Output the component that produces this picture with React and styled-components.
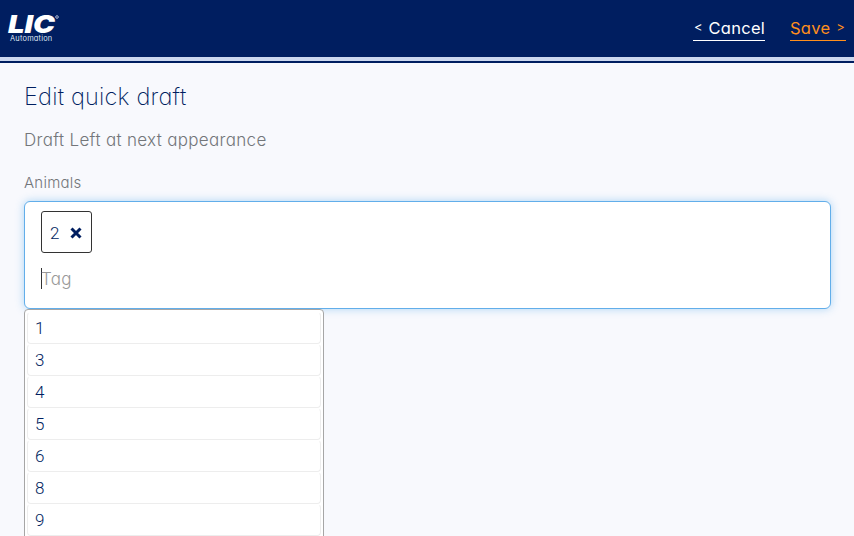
import React from "react";
import styled, { createGlobalStyle } from "styled-components";

const GlobalStyle = createGlobalStyle`
  * { box-sizing: border-box; }
  html, body { margin: 0; height: 100%; overflow: hidden; background: #f8f9fd; }
  body {
    font-family: Inter, Lato, sans-serif;
    font-weight: 300;
    font-feature-settings: "cv11" 1;
    color: #001e60;
  }
`;

const Page = styled.div`
  height: 536px;
  overflow: hidden;
`;

const Header = styled.header`
  display: flex;
  justify-content: space-between;
  height: 63px;
  padding: 0 8px 0 9px;
  background: linear-gradient(#001e60 57px, #ccd8ef 57px, #ccd8ef 61px, #001e60 61px);
`;

const Logo = styled.div`
  width: 52px;
  padding-top: 15px;
  color: #fff;
`;

const LogoName = styled.svg`
  display: block;
  overflow: visible;
  width: 52px;
  height: 19px;
  font: italic 900 25px Inter, sans-serif;
  fill: #fff;
`;

const LogoCaption = styled.div`
  padding-left: 1px;
  font-size: 7.4px;
  font-weight: 400;
  line-height: 9px;
  letter-spacing: 0.22px;
  color: #dfe4f2;
`;

const Actions = styled.nav`
  display: flex;
  gap: 25px;
  padding-top: 17px;
`;

const Action = styled.a`
  display: flex;
  justify-content: space-between;
  width: ${(p) => p.$width}px;
  height: 24px;
  padding: 0 ${(p) => (p.$trailing ? 1 : 0)}px 0 ${(p) => (p.$trailing ? 0 : 1)}px;
  border-bottom: 1px solid currentColor;
  color: ${(p) => p.$color};
  font-size: 16.5px;
  font-weight: 400;
  line-height: 22px;
  letter-spacing: 0.25px;
  white-space: nowrap;
`;

const Chevron = styled.span`
  font-size: 13px;
  line-height: 21px;
`;

const Main = styled.main`
  padding: 19px 23px 0 24px;
`;

const Title = styled.h1`
  margin: 0;
  font-size: 23.5px;
  font-weight: 200;
  line-height: 30px;
  letter-spacing: 0.2px;
`;

const Subtitle = styled.p`
  margin: 17px 0 0;
  color: #73767a;
  font-size: 17px;
  line-height: 22px;
  letter-spacing: 0.32px;
`;

const Label = styled.label`
  display: block;
  margin-top: 22px;
  color: #73767a;
  font-size: 15px;
  line-height: 20px;
  letter-spacing: 0.25px;
`;

const TagField = styled.div`
  height: 108px;
  margin-top: 8px;
  padding: 9px 16px;
  border: 1px solid #62aeea;
  border-radius: 6px;
  background: #fff;
  box-shadow: 0 0 8px rgba(82, 168, 236, 0.45);
`;

const Chip = styled.div`
  display: flex;
  align-items: center;
  gap: 11px;
  width: 51px;
  height: 42px;
  padding: 2px 8px 0;
  border: 1px solid #333;
  border-radius: 3px;
  font-family: Roboto, sans-serif;
  font-size: 17px;
`;

const Cross = styled.svg`
  flex: none;
  width: 12px;
  height: 12px;
`;

const TagInput = styled.div`
  width: 60px;
  height: 21px;
  margin-top: 15px;
  border-left: 1px solid #333;
  color: #999;
  font-size: 17px;
  line-height: 23px;
  letter-spacing: 0.3px;
  text-indent: -1px;
`;

const Menu = styled.ul`
  width: 300px;
  height: 260px;
  margin: 0;
  padding: 2px;
  border: 1px solid #a6a6a6;
  border-radius: 4px;
  background: #fff;
  list-style: none;
  position: relative;
`;

const Option = styled.li`
  height: 32px;
  padding-left: 7px;
  border: 1px solid #ededed;
  border-top-color: ${(p) => (p.$first ? "#fff" : "transparent")};
  border-radius: 4px;
  font-family: Roboto, sans-serif;
  font-size: 17px;
  line-height: 30px;
`;

const tags = [1, 3, 4, 5, 6, 8, 9];

export default function App() {
  return (
    <Page>
      <GlobalStyle />
      <Header>
        <Logo>
          <LogoName viewBox="0 0 52 19">
            <text x="-1" y="18.3" textLength="47" lengthAdjust="spacingAndGlyphs">LIC</text>
            <circle cx="48" cy="2" r="1.3" fill="none" stroke="#aab5d1" />
          </LogoName>
          <LogoCaption>Automation</LogoCaption>
        </Logo>
        <Actions>
          <Action $width={72} $color="#fff">
            <Chevron>&lt;</Chevron> Cancel
          </Action>
          <Action $width={56} $color="#ff8f1c" $trailing>
            Save <Chevron>&gt;</Chevron>
          </Action>
        </Actions>
      </Header>
      <Main>
        <Title>Edit quick draft</Title>
        <Subtitle>Draft Left at next appearance</Subtitle>
        <Label>Animals</Label>
        <TagField>
          <Chip>
            2
            <Cross viewBox="0 0 12 12">
              <path d="M1.5 1.5 10.5 10.5M10.5 1.5 1.5 10.5" stroke="#001e60" strokeWidth="3" />
            </Cross>
          </Chip>
          <TagInput>Tag</TagInput>
        </TagField>
        <Menu>
          {tags.map((tag, i) => (
            <Option key={tag} $first={i === 0}>{tag}</Option>
          ))}
        </Menu>
      </Main>
    </Page>
  );
}
